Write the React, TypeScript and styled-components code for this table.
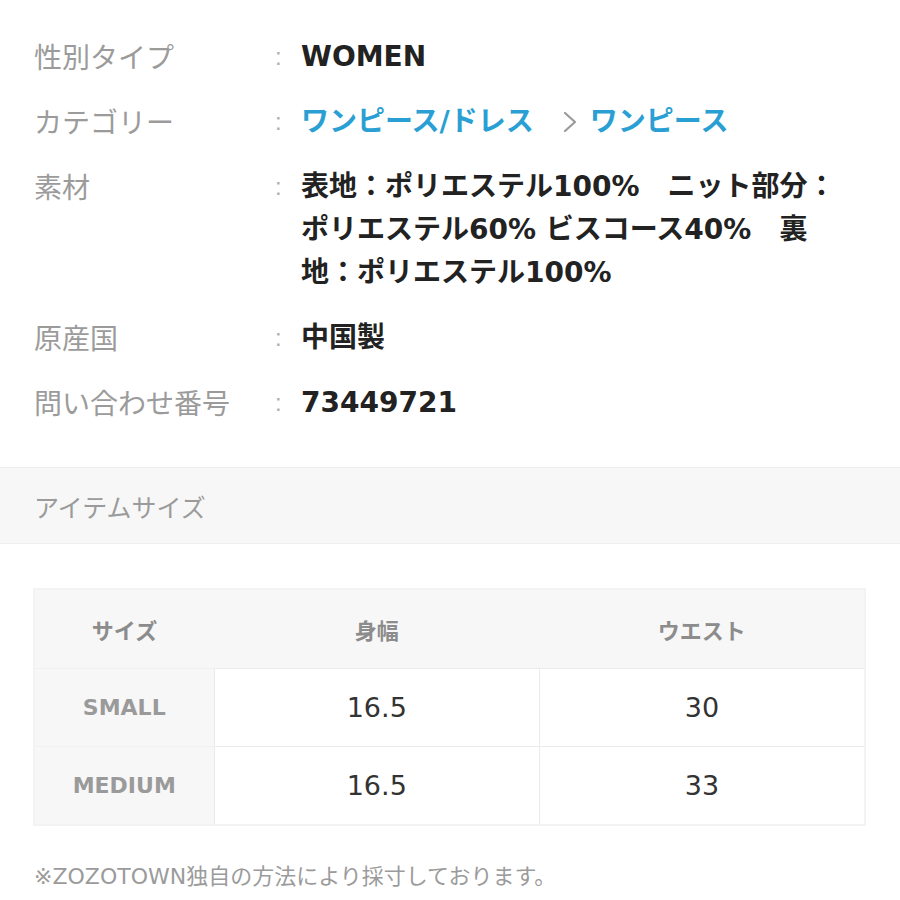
import React from "react";
import styled, { createGlobalStyle } from "styled-components";

const Global = createGlobalStyle`
  html, body { margin: 0; padding: 0; background: #ffffff; }
  body { font-family: "Noto Sans CJK JP", sans-serif; }
`;

const Page = styled.div`
  width: 900px;
  min-height: 900px;
  background: #fff;
`;

const SpecList = styled.dl`
  margin: 0;
  padding: 35px 58px 0 34px;
  display: flex;
  flex-direction: column;
  gap: 22px;
`;

const SpecRow = styled.div`
  display: grid;
  grid-template-columns: 241px 26px 1fr;
  line-height: 43px;
  font-size: 28px;
`;

const Label = styled.dt`
  margin: 0;
  color: #9b9b9b;
  font-family: "Noto Sans CJK JP", sans-serif;
  font-weight: 400;
`;

const Colon = styled.span`
  color: #b0b0b0;
  font-family: "Liberation Sans", sans-serif;
  font-size: 24px;
`;

const Value = styled.dd`
  margin: 0;
  color: #222;
  font-family: "DejaVu Sans", "Noto Sans CJK JP", sans-serif;
  font-weight: 700;
  word-break: normal;
  line-break: strict;
`;

const Crumbs = styled.span`
  display: inline-flex;
  align-items: center;
`;

const CrumbLink = styled.a`
  color: #2a9fd3;
  text-decoration: none;
`;

const Chevron = styled.svg`
  width: 14px;
  height: 22px;
  margin: 0 13px 0 29px;
  flex: none;
`;

const SectionBand = styled.h2`
  margin: 43px 0 0;
  box-sizing: border-box;
  height: 77px;
  background: #f7f7f7;
  border-top: 1px solid #eeeeee;
  border-bottom: 1px solid #eeeeee;
  padding-left: 34px;
  display: flex;
  align-items: center;
  font-size: 25px;
  font-weight: 400;
  color: #9b9b9b;
  font-family: "Noto Sans CJK JP", sans-serif;
`;

const TableWrap = styled.div`
  margin: 44px 34px 0 33px;
`;

const SizeTable = styled.table`
  width: 100%;
  border-collapse: collapse;
  table-layout: fixed;
  border: 2px solid #f3f3f3;
`;

const HeadCell = styled.th`
  height: 78px;
  background: #f7f7f7;
  color: #8c8c8c;
  font-family: "Noto Sans CJK JP", sans-serif;
  font-weight: 700;
  font-size: 22px;
  text-align: center;
  padding: 0;
`;

const RowHead = styled.th`
  height: 77px;
  background: #f7f7f7;
  color: #9a9a9a;
  font-family: "DejaVu Sans", sans-serif;
  font-weight: 700;
  font-size: 22px;
  text-align: center;
  padding: 0;
  border-top: 1px solid #f1f1f1;
`;

const DataCell = styled.td`
  height: 77px;
  background: #fff;
  border: 1px solid #ebebeb;
  color: #333;
  font-family: "DejaVu Sans", sans-serif;
  font-size: 27px;
  text-align: center;
  padding: 0;
`;

const Note = styled.p`
  margin: 36px 0 0 34px;
  font-size: 22px;
  line-height: 30px;
  color: #9b9b9b;
  font-family: "DejaVu Sans", "Noto Sans CJK JP", sans-serif;
`;

const rows = [
  { size: "SMALL", width: "16.5", waist: "30" },
  { size: "MEDIUM", width: "16.5", waist: "33" },
];

export default function App() {
  return (
    <Page>
      <Global />
      <SpecList>
        <SpecRow>
          <Label>性別タイプ</Label>
          <Colon>:</Colon>
          <Value>WOMEN</Value>
        </SpecRow>
        <SpecRow>
          <Label>カテゴリー</Label>
          <Colon>:</Colon>
          <Value>
            <Crumbs>
              <CrumbLink href="#">ワンピース/ドレス</CrumbLink>
              <Chevron viewBox="0 0 14 22">
                <path d="M2 2 L12 11 L2 20" fill="none" stroke="#9a9a9a" strokeWidth="2.2" strokeLinecap="round" strokeLinejoin="round" />
              </Chevron>
              <CrumbLink href="#">ワンピース</CrumbLink>
            </Crumbs>
          </Value>
        </SpecRow>
        <SpecRow>
          <Label>素材</Label>
          <Colon>:</Colon>
          <Value>表地：ポリエステル100%　ニット部分：ポリエステル60% ビスコース40%　裏地：ポリエステル100%</Value>
        </SpecRow>
        <SpecRow>
          <Label>原産国</Label>
          <Colon>:</Colon>
          <Value>中国製</Value>
        </SpecRow>
        <SpecRow>
          <Label>問い合わせ番号</Label>
          <Colon>:</Colon>
          <Value>73449721</Value>
        </SpecRow>
      </SpecList>

      <SectionBand>アイテムサイズ</SectionBand>

      <TableWrap>
        <SizeTable>
          <colgroup>
            <col style={{ width: "180px" }} />
            <col />
            <col />
          </colgroup>
          <thead>
            <tr>
              <HeadCell>サイズ</HeadCell>
              <HeadCell>身幅</HeadCell>
              <HeadCell>ウエスト</HeadCell>
            </tr>
          </thead>
          <tbody>
            {rows.map((r) => (
              <tr key={r.size}>
                <RowHead>{r.size}</RowHead>
                <DataCell>{r.width}</DataCell>
                <DataCell>{r.waist}</DataCell>
              </tr>
            ))}
          </tbody>
        </SizeTable>
      </TableWrap>

      <Note>※ZOZOTOWN独自の方法により採寸しております。</Note>
    </Page>
  );
}
